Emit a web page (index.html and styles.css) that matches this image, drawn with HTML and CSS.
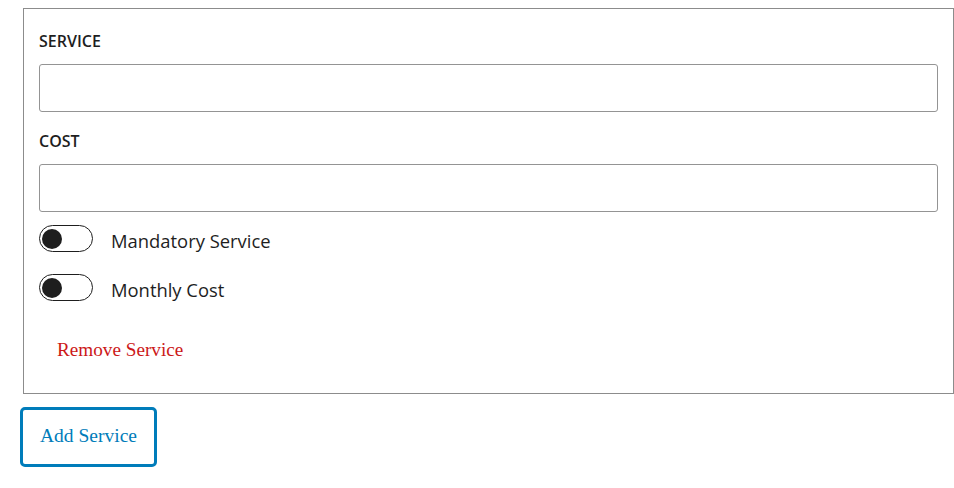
FILE: index.html
```html
<!DOCTYPE html>
<html lang="en">
<head>
<meta charset="utf-8">
<title>Services</title>
<link rel="stylesheet" href="styles.css">
</head>
<body>
  <div class="service-card">
    <div class="field">
      <label class="field-label" for="service-name">SERVICE</label>
      <input class="field-input" id="service-name" type="text">
    </div>
    <div class="field field-cost">
      <label class="field-label" for="service-cost">COST</label>
      <input class="field-input" id="service-cost" type="text">
    </div>
    <div class="toggles">
      <label class="toggle-row">
        <span class="toggle"><span class="toggle-knob"></span></span>
        <span class="toggle-label">Mandatory Service</span>
      </label>
      <label class="toggle-row">
        <span class="toggle"><span class="toggle-knob"></span></span>
        <span class="toggle-label">Monthly Cost</span>
      </label>
    </div>
    <button class="remove-btn" type="button">Remove Service</button>
  </div>
  <button class="add-btn" type="button">Add Service</button>
</body>
</html>
```
FILE: styles.css
```css
* {
  box-sizing: border-box;
}

body {
  margin: 8px 0 0 20px;
  background: #ffffff;
  font-family: "Liberation Serif", "Times New Roman", serif;
  color: #1e1e1e;
}

.service-card {
  margin-left: 3px;
  width: 931px;
  border: 1px solid #8c8c8c;
  padding: 21px 15px 25px 15px;
  font-family: "Open Sans", "Noto Sans", sans-serif;
}

.field {
  display: flex;
  flex-direction: column;
}

.field-cost {
  margin-top: 18px;
}

.field-label {
  display: block;
  font-size: 16px;
  font-weight: 600;
  line-height: 22px;
  color: #1e1e1e;
  margin-bottom: 12px;
}

.field-input {
  display: block;
  width: 100%;
  height: 48px;
  margin: 0;
  border: 1px solid #949494;
  border-radius: 3px;
  background: #ffffff;
  font: inherit;
}

.toggles {
  margin-top: 13px;
  display: flex;
  flex-direction: column;
  gap: 22px;
}

.toggle-row {
  display: flex;
  align-items: center;
  height: 27px;
}

.toggle {
  display: flex;
  align-items: center;
  width: 54px;
  height: 27px;
  border: 1px solid #1e1e1e;
  border-radius: 14px;
  padding-left: 2px;
  flex-shrink: 0;
}

.toggle-knob {
  width: 20px;
  height: 20px;
  border-radius: 50%;
  background: #1e1e1e;
}

.toggle-label {
  margin-left: 18px;
  font-size: 18.4px;
  line-height: 27px;
  padding-top: 4px;
  color: #1e1e1e;
}

.remove-btn {
  display: block;
  margin: 31px 0 0 0;
  height: 36px;
  padding: 0 0 0 18px;
  border: none;
  background: none;
  font-family: "Liberation Serif", "Times New Roman", serif;
  font-size: 19.2px;
  color: #cc1818;
}

.add-btn {
  display: block;
  margin-top: 13px;
  width: 137px;
  height: 60px;
  padding: 0 0 2px 0;
  border: 3px solid #007cba;
  border-radius: 5px;
  background: #ffffff;
  font-family: "Liberation Serif", "Times New Roman", serif;
  font-size: 19.5px;
  color: #007cba;
}
```
